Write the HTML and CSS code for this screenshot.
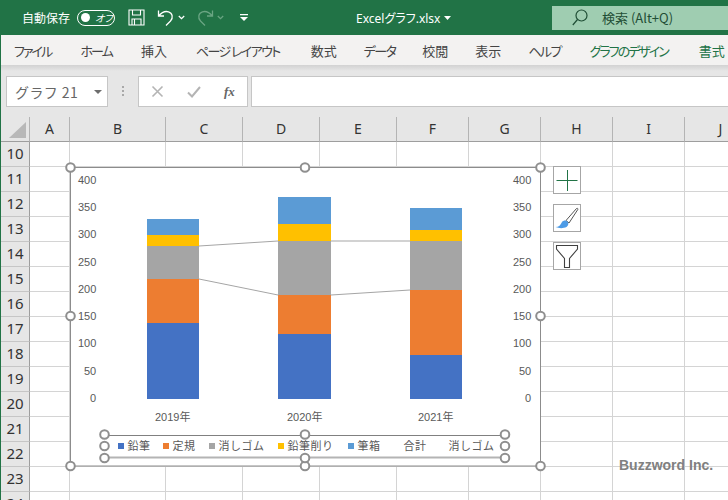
FILE: index.html
```html
<!DOCTYPE html>
<html lang="ja">
<head>
    <meta charset="UTF-8">
    <title>Excelグラフ.xlsx</title>
    <link rel="stylesheet" href="styles.css">
</head>
<body>

<div class="page">
    <!-- title bar -->
    <div class="titlebar">
        <span class="autosave">自動保存</span>
        <span class="toggle"><span class="knob"></span><span class="toggle-text">オフ</span></span>
        <svg class="qat-save" width="17" height="17" viewBox="0 0 17 17" fill="none" stroke="#fff" stroke-width="1.1">
            <path d="M1 1H16V16H1Z"/>
            <path d="M4.5 1V6H12.5V1M4 16V10H13V16M6.5 10V16"/>
        </svg>
        <svg class="qat-undo" width="17" height="17" viewBox="0 0 17 17" fill="none" stroke="#fff" stroke-width="1.3">
            <path d="M1.5 1.5V7H7M1.5 7C4.5 3.5 8 1.800 11.500 2.800C15.500 4 16.500 9 13.500 12L9 16.500"/>
        </svg>
        <svg class="qat-caret" width="7" height="5" viewBox="0 0 7 5" fill="none" stroke="#fff" stroke-width="1.300"><path d="M.8 1L3.500 3.700L6.200 1"/></svg>
        <svg class="qat-redo" width="17" height="17" viewBox="0 0 17 17" fill="none" stroke="#6aa583" stroke-width="1.3">
            <path d="M15.500 1.500V7H10M15.500 7C12.500 3.500 9 1.800 5.500 2.800C1.500 4 .5 9 3.500 12L8 16.500"/>
        </svg>
        <svg class="qat-caret-off" width="7" height="5" viewBox="0 0 7 5" fill="none" stroke="#6aa583" stroke-width="1.2"><path d="M.8 1L3.500 3.700L6.200 1"/></svg>
        <svg class="qat-more" width="8" height="7" viewBox="0 0 8 7" fill="#fff"><path d="M0 0H8V1.200H0ZM0 3H8L4 7Z"/></svg>
        <span class="filename">Excelグラフ.xlsx</span>
        <svg class="file-caret" width="7" height="4" viewBox="0 0 7 4" fill="#fff"><path d="M0 0H7L3.500 4Z"/></svg>
        <div class="search">
            <svg width="16" height="17" viewBox="0 0 16 17" fill="none" stroke="#1f4e35" stroke-width="1.200"><circle cx="9.500" cy="6.500" r="5.500"/><path d="M5.500 10.500L.8 16"/></svg>
            <span>検索 (Alt+Q)</span>
        </div>
    </div>

    <!-- ribbon tabs -->
    <div class="tabs">
        <span class="kana kana-first">ファイル</span>
        <span class="kana kana-first">ホーム</span>
        <span>挿入</span>
        <span class="kana">ページ レイアウト</span>
        <span class="tab-formula">数式</span>
        <span class="kana tab-tight">データ</span>
        <span class="tab-tight">校閲</span>
        <span class="tab-tight">表示</span>
        <span class="kana tab-tight">ヘルプ</span>
        <span class="tab-green tab-design">グラフのデザイン</span>
        <span class="tab-green tab-format">書式</span>
    </div>

    <!-- formula bar -->
    <div class="formula-bar">
        <div class="name-box">
            <span>グラフ 21</span>
            <svg width="8" height="4" viewBox="0 0 8 4" fill="#6d6d6d"><path d="M0 0H8L4 4Z"/></svg>
        </div>
        <div class="dots"><i></i><i></i><i></i></div>
        <div class="fx-buttons">
            <svg width="13" height="13" viewBox="0 0 13 13" fill="none" stroke="#b4b4b4" stroke-width="1.600"><path d="M1.500 1.500L11.500 11.500M11.500 1.500L1.500 11.500"/></svg>
            <svg width="14" height="12" viewBox="0 0 14 12" fill="none" stroke="#b4b4b4" stroke-width="2"><path d="M1 6.500L5 10.500L13 1"/></svg>
            <span class="fx">fx</span>
        </div>
        <div class="formula-input"></div>
    </div>

    <!-- sheet -->
    <div class="sheet-wrap">
        <table class="sheet">
            <colgroup>
                <col class="c-head"><col class="c-a"><col class="c-b"><col class="c-n"><col class="c-n"><col class="c-n"><col class="c-w"><col class="c-w"><col class="c-w"><col class="c-w"><col class="c-w">
            </colgroup>
            <thead>
                <tr>
                    <th class="corner"><svg width="28" height="23" viewBox="0 0 28 23" fill="#b8b8b8"><path d="M8 21H25V5Z"/></svg></th>
                    <th>A</th><th>B</th><th>C</th><th>D</th><th>E</th><th>F</th><th>G</th><th>H</th><th>I</th><th>J</th>
                </tr>
            </thead>
            <tbody>
                <tr><th>10</th><td></td><td></td><td></td><td></td><td></td><td></td><td></td><td></td><td></td><td></td></tr>
                <tr><th>11</th><td></td><td></td><td></td><td></td><td></td><td></td><td></td><td></td><td></td><td></td></tr>
                <tr><th>12</th><td></td><td></td><td></td><td></td><td></td><td></td><td></td><td></td><td></td><td></td></tr>
                <tr><th>13</th><td></td><td></td><td></td><td></td><td></td><td></td><td></td><td></td><td></td><td></td></tr>
                <tr><th>14</th><td></td><td></td><td></td><td></td><td></td><td></td><td></td><td></td><td></td><td></td></tr>
                <tr><th>15</th><td></td><td></td><td></td><td></td><td></td><td></td><td></td><td></td><td></td><td></td></tr>
                <tr><th>16</th><td></td><td></td><td></td><td></td><td></td><td></td><td></td><td></td><td></td><td></td></tr>
                <tr><th>17</th><td></td><td></td><td></td><td></td><td></td><td></td><td></td><td></td><td></td><td></td></tr>
                <tr><th>18</th><td></td><td></td><td></td><td></td><td></td><td></td><td></td><td></td><td></td><td></td></tr>
                <tr><th>19</th><td></td><td></td><td></td><td></td><td></td><td></td><td></td><td></td><td></td><td></td></tr>
                <tr><th>20</th><td></td><td></td><td></td><td></td><td></td><td></td><td></td><td></td><td></td><td></td></tr>
                <tr><th>21</th><td></td><td></td><td></td><td></td><td></td><td></td><td></td><td></td><td></td><td></td></tr>
                <tr><th>22</th><td></td><td></td><td></td><td></td><td></td><td></td><td></td><td></td><td></td><td></td></tr>
                <tr><th>23</th><td></td><td></td><td></td><td></td><td></td><td></td><td></td><td></td><td></td><td></td></tr>
                <tr><th>24</th><td></td><td></td><td></td><td></td><td></td><td></td><td></td><td></td><td></td><td></td></tr>
            </tbody>
        </table>

        <!-- chart floats over the cells, viewBox uses page coordinates -->
        <svg class="chart" width="471" height="300" viewBox="70 167 471 300">
            <rect x="70.500" y="167.500" width="470" height="298.500" fill="#fff" stroke="#8c8c8c"/>

            <g class="axis">
                <text x="78" y="184">400</text><text x="78" y="211">350</text><text x="78" y="238">300</text>
                <text x="78" y="266">250</text><text x="78" y="293">200</text><text x="78" y="320">150</text>
                <text x="78" y="347">100</text><text x="84" y="375">50</text><text x="90" y="402">0</text>
                <text x="513" y="184">400</text><text x="513" y="211">350</text><text x="513" y="238">300</text>
                <text x="513" y="266">250</text><text x="513" y="293">200</text><text x="513" y="320">150</text>
                <text x="513" y="347">100</text><text x="519" y="375">50</text><text x="525" y="402">0</text>
                <text x="155" y="421">2019年</text><text x="287" y="421">2020年</text><text x="418" y="421">2021年</text>
            </g>

            <path d="M199 246L278 241M331 241H410M199 279L278 295M331 295L410 290" fill="none" stroke="#a5a5a5"/>

            <rect class="s-blue" x="147" y="323" width="52" height="76"/>
            <rect class="s-orange" x="147" y="279" width="52" height="44"/>
            <rect class="s-gray" x="147" y="246" width="52" height="33"/>
            <rect class="s-yellow" x="147" y="235" width="52" height="11"/>
            <rect class="s-sky" x="147" y="219" width="52" height="16"/>

            <rect class="s-blue" x="278" y="334" width="53" height="65"/>
            <rect class="s-orange" x="278" y="295" width="53" height="39"/>
            <rect class="s-gray" x="278" y="241" width="53" height="54"/>
            <rect class="s-yellow" x="278" y="224" width="53" height="17"/>
            <rect class="s-sky" x="278" y="197" width="53" height="27"/>

            <rect class="s-blue" x="410" y="355" width="52" height="44"/>
            <rect class="s-orange" x="410" y="290" width="52" height="65"/>
            <rect class="s-gray" x="410" y="241" width="52" height="49"/>
            <rect class="s-yellow" x="410" y="230" width="52" height="11"/>
            <rect class="s-sky" x="410" y="208" width="52" height="22"/>

            <g class="legend">
                <rect class="s-blue" x="118" y="443" width="6" height="6"/><text x="127.500" y="450">鉛筆</text>
                <rect class="s-orange" x="163" y="443" width="6" height="6"/><text x="172.500" y="450">定規</text>
                <rect class="s-gray" x="209" y="443" width="6" height="6"/><text x="218.500" y="450">消しゴム</text>
                <rect class="s-yellow" x="278" y="443" width="6" height="6"/><text x="287.500" y="450">鉛筆削り</text>
                <rect class="s-sky" x="348" y="443" width="6" height="6"/><text x="357.500" y="450">筆箱</text>
                <text x="403.500" y="450">合計</text>
                <text x="448.500" y="450">消しゴム</text>
            </g>
            <path d="M104.500 435.500H505" fill="none" stroke="#808080"/>
            <path d="M104.500 457.500H505" fill="none" stroke="#b4b4b4" stroke-width="2"/>

            <g class="handles">
                <circle cx="70.500" cy="167.500" r="4.300"/><circle cx="305" cy="167.500" r="4.300"/><circle cx="540.500" cy="167.500" r="4.300"/>
                <circle cx="70.500" cy="316" r="4.300"/><circle cx="540.500" cy="316" r="4.300"/>
                <circle cx="70.500" cy="466" r="4.300"/><circle cx="305" cy="466" r="4.300"/><circle cx="540.500" cy="466" r="4.300"/>
                <circle cx="104.500" cy="434.500" r="4.300"/><circle cx="305" cy="434.500" r="4.300"/><circle cx="505" cy="434.500" r="4.300"/>
                <circle cx="104.500" cy="446" r="4.300"/><circle cx="505" cy="446" r="4.300"/>
                <circle cx="104.500" cy="458" r="4.300"/><circle cx="305" cy="458" r="4.300"/><circle cx="505" cy="458" r="4.300"/>
            </g>
        </svg>

        <div class="chart-tools">
            <div class="tool">
                <svg width="26" height="26" viewBox="0 0 26 26" stroke="#217346"><path d="M2.500 13.500H23.500M13.500 3V24"/></svg>
            </div>
            <div class="tool">
                <svg width="26" height="26" viewBox="0 0 26 26">
                    <path d="M12 15.500L22.500 3.500C23.500 3 24 3.500 23.800 4.500L15 18Z" fill="#fff" stroke="#555" stroke-width="1"/>
                    <path d="M1.500 22C5 22 6.500 20 8 17C9.500 15 12 15 13.500 16.500C15 18 14.500 20.500 12.500 22C9.500 23.500 5 23.500 1.500 22Z" fill="#4d9be6"/>
                </svg>
            </div>
            <div class="tool">
                <svg width="26" height="26" viewBox="0 0 26 26" fill="none" stroke="#404040" stroke-width="1.100"><path d="M2.500 2.500H23.500V6L15.500 15.500V24.500H10.500V15.500L2.500 6Z"/></svg>
            </div>
        </div>

        <div class="watermark">Buzzword Inc.</div>
    </div>
</div>

</body>
</html>
```

FILE: styles.css
```css
html, body { margin: 0; padding: 0; }
body { font-family: "Noto Sans CJK JP", "Noto Sans", sans-serif; background-color: #fff; color: #333; }
.page { width: 727px; height: 500px; border-left: 1px solid #217346; overflow: hidden; }

/* title bar */
.titlebar { display: flex; align-items: center; height: 35px; background-color: #217346; color: #fff; font-size: 12px; }
.titlebar > * { flex-shrink: 0; }
.autosave { width: 48px; margin-left: 21px; white-space: nowrap; }
.toggle { display: flex; align-items: center; box-sizing: border-box; width: 38px; height: 16px; margin-left: 7px; border: 1px solid #fff; border-radius: 8px; }
.knob { width: 9px; height: 9px; margin-left: 3px; border-radius: 50%; background-color: #fff; }
.toggle-text { margin-left: 5px; font-size: 10px; font-style: italic; line-height: 14px; font-feature-settings: "palt"; white-space: nowrap; }
.qat-save { margin-left: 13px; }
.qat-undo { margin-left: 12px; }
.qat-caret { margin-left: 4px; }
.qat-redo { margin-left: 12px; }
.qat-caret-off { margin-left: 3px; }
.qat-more { margin-left: 16px; }
.filename { width: 81px; margin-left: 108px; font-family: "Noto Sans", "Noto Sans CJK JP", sans-serif; font-size: 12px; white-space: nowrap; font-feature-settings: "palt"; }
.file-caret { margin-left: 7px; }
.search { display: flex; align-items: center; width: 176px; height: 24px; margin-left: 101px; background-color: #9fcdb1; color: #1f4e35; font-size: 13px; }
.search svg { margin-left: 20px; }
.search span { margin-left: 14px; white-space: nowrap; }

/* ribbon tabs */
.tabs { display: flex; align-items: center; gap: 29px; height: 30px; padding-left: 13px; background-color: #f3f2f1; font-size: 13px; color: #444; white-space: nowrap; font-feature-settings: "palt"; }
.kana { letter-spacing: -1.600px; }
.kana-first { letter-spacing: -1.900px; }
.tab-formula { margin-left: 2px; }
.tab-tight { margin-left: -2px; }
.tab-green { color: #217346; }
.tab-design { letter-spacing: -2px; }
.tab-format { margin-left: 2px; }

/* formula bar */
.formula-bar { display: flex; align-items: flex-start; box-sizing: border-box; height: 52px; padding: 11px 0 0 5px; background: linear-gradient(#d2d2d2, #e6e6e6 6px); }
.name-box { display: flex; align-items: center; justify-content: space-between; box-sizing: border-box; width: 102px; height: 31px; padding: 0 5px 0 8px; background-color: #fff; border: 1px solid #c6c6c6; font-size: 14px; color: #666; }
.name-box span { letter-spacing: .4px; white-space: nowrap; }
.dots { display: flex; flex-direction: column; gap: 2px; margin: 10px 14px 0; }
.dots i { width: 2px; height: 2px; background-color: #a8a8a8; }
.fx-buttons { display: flex; align-items: center; box-sizing: border-box; width: 110px; height: 31px; padding-left: 12px; background-color: #fff; border: 1px solid #c6c6c6; }
.fx-buttons svg + svg { margin-left: 23px; }
.fx { margin-left: 23px; font-family: "Liberation Serif", serif; font-size: 13px; font-style: italic; font-weight: bold; color: #666; }
.formula-input { flex: 1; box-sizing: border-box; height: 31px; margin-left: 3px; background-color: #fff; border: 1px solid #c6c6c6; border-right: none; }

/* sheet */
.sheet-wrap { position: relative; }
.sheet { table-layout: fixed; width: 755px; border-collapse: separate; border-spacing: 0; }
.c-head { width: 29px; }
.c-a { width: 40px; }
.c-b { width: 96px; }
.c-n { width: 77px; }
.c-w { width: 72px; }
.sheet th { box-sizing: border-box; padding: 0; background-color: #e6e6e6; font-family: "Noto Sans", sans-serif; font-size: 14px; font-weight: normal; color: #333; border-right: 1px solid #b4b4b4; }
.sheet thead th { height: 25px; padding-bottom: 1px; border-bottom: 1px solid #9e9e9e; }
.sheet tbody th { height: 25px; padding-bottom: 2px; border-right: 1px solid #9e9e9e; border-bottom: 1px solid #c6c6c6; font-size: 15px; }
.sheet td { box-sizing: border-box; height: 25px; padding: 0; border-right: 1px solid #d4d4d4; border-bottom: 1px solid #d4d4d4; }
.corner svg { display: block; }

/* chart */
.chart { position: absolute; left: 69px; top: 50px; overflow: visible; }
.chart text { font-family: "Liberation Sans", "Noto Sans CJK JP", sans-serif; font-size: 11px; fill: #595959; }
.legend text { font-family: "Noto Sans CJK JP", sans-serif; font-size: 11px; letter-spacing: .5px; }
.s-blue { fill: #4472c4; }
.s-orange { fill: #ed7d31; }
.s-gray { fill: #a5a5a5; }
.s-yellow { fill: #ffc000; }
.s-sky { fill: #5b9bd5; }
.handles circle { fill: #fff; stroke: #8f8f8f; stroke-width: 2; }

.chart-tools { position: absolute; left: 552px; top: 49px; display: flex; flex-direction: column; gap: 10px; }
.tool { box-sizing: border-box; width: 28px; height: 28px; background-color: #fff; border: 1px solid #a6a6a6; }
.tool svg { display: block; }

.watermark { position: absolute; left: 618px; top: 340px; font-family: "Liberation Sans", sans-serif; font-size: 14px; font-weight: bold; color: #808080; white-space: nowrap; }
```
